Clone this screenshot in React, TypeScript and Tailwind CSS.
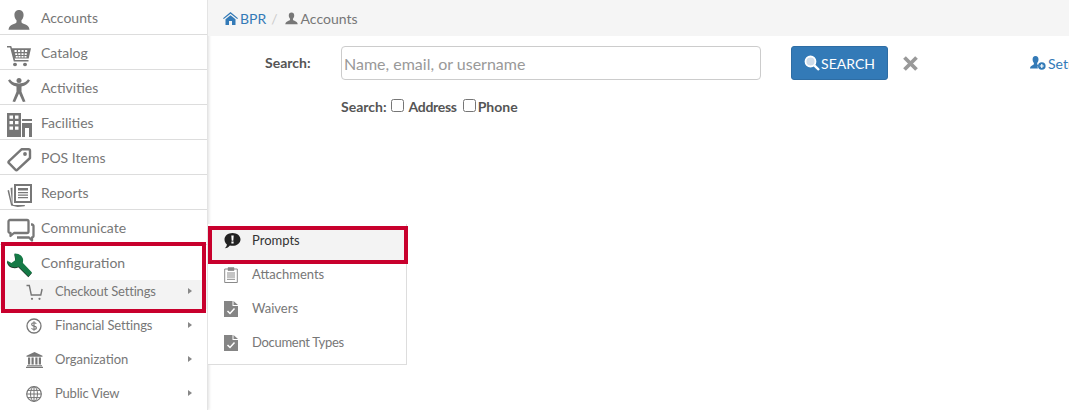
import type { ReactNode } from "react";

const gray = "#777777";

function UserIcon({ size = 24, color = gray }: { size?: number; color?: string }) {
  return (
    <svg width={size} height={size} viewBox="0 0 24 24" fill={color} className="shrink-0">
      <path d="M12 1c3.300 0 5 2.400 5 5.600 0 2.400-.9 4.500-2.300 5.800v2.100c.5 1 2.300 1.700 4.400 2.500 2.300.9 3.700 2 4.400 5.500H.5c.7-3.500 2.100-4.600 4.400-5.500 2.100-.8 3.900-1.500 4.400-2.500v-2.100C7.900 11.100 7 9 7 6.600 7 3.400 8.700 1 12 1z" />
    </svg>
  );
}

function CartIcon() {
  return (
    <svg width="24" height="22" viewBox="0 0 24 24" preserveAspectRatio="none" fill={gray} className="mt-[2px]">
      <path d="M0 1h4.200l.8 2.500h19l-2.300 11.300H7.700l.4 1.600h13.400v1.500H6.800L3.100 2.600H0z" />
      <g fill="#fff">
        <path d="M7.500 5.500h2.200v2.200H7.500zM11 5.500h2.200v2.200H11zM14.500 5.500h2.200v2.200h-2.200zM18 5.500h2.200v2.200H18zM8.200 9h2v2h-2zM11.300 9h2v2h-2zM14.500 9h2v2h-2zM17.700 9h2v2h-2zM8.800 12h2v1.600h-2zM11.500 12h2v1.600h-2zM14.500 12h2v1.600h-2zM17.500 12h2v1.600h-2z" />
      </g>
      <circle cx="8" cy="21.300" r="2" />
      <circle cx="18" cy="21.300" r="2" />
    </svg>
  );
}

function ActivityIcon() {
  return (
    <svg width="24" height="24" viewBox="0 0 24 24" fill={gray}>
      <circle cx="12" cy="2.500" r="2.500" />
      <path d="M1 2.500l2-1.200c2 2.600 3.900 4.100 9 4.100s7-1.500 9-4.100l2 1.200c-2 3.300-4.700 5.300-8.500 6v5.200L18.500 23.500l-2.600.5L12 15.500 8.100 24l-2.600-.5L9.500 13.700V8.500C5.700 7.800 3 5.800 1 2.500z" />
    </svg>
  );
}

function BuildingIcon() {
  return (
    <svg width="25" height="24" viewBox="0 0 25 24" fill={gray}>
      <path fillRule="evenodd" d="M0 0h14v24H0zM2.500 2.500v3.300h3.500V2.500zM8 2.500v3.300h3.500V2.500zM2.500 8v3.300h3.500V8zM8 8v3.300h3.500V8zM2.500 13.500v3.300h3.500v-3.300zM8 13.500v3.300h3.500v-3.300z" />
      <path d="M15 6h10v2H15z" />
      <path fillRule="evenodd" d="M15 10h10v14h-3v-9h-4v9h-3z" />
    </svg>
  );
}

function TagIcon() {
  return (
    <svg width="25" height="25" viewBox="0 0 25 25" fill="none" stroke={gray} strokeWidth="2.400" strokeLinejoin="round">
      <path d="M14.500 2.300h7a1.500 1.500 0 0 1 1.500 1.500v7.200L10.500 22.700a1.500 1.500 0 0 1-2.100 0L2 16.200a1.500 1.500 0 0 1 0-2.100z" />
      <circle cx="18" cy="7" r="1.900" fill={gray} stroke="none" />
    </svg>
  );
}

function ReportsIcon() {
  return (
    <svg width="25" height="24" viewBox="0 0 25 24" fill={gray}>
      <path fillRule="evenodd" d="M7 1h18v19H7zM9 3v15h14V3z" />
      <path d="M11 5h10v2.500H11zM11 9h10v1.200H11zM11 11.500h10v1.200H11zM11 14h10v1.200H11z" />
      <path d="M5.500 4.500v15.800l.9 1.700H18l-.4 1.200-7 .8-6.500-1.500L.5 7.500l1.500-.5 3 13.500L3.500 5z" />
    </svg>
  );
}

function ChatIcon() {
  return (
    <svg width="28" height="24" viewBox="0 0 28 24" fill="none" stroke={gray} strokeWidth="2.300" strokeLinejoin="round">
      <path d="M3 2h17a1.500 1.500 0 0 1 1.500 1.500v10a1.500 1.500 0 0 1-1.500 1.500H7l-3.500 3V15H3a1.500 1.500 0 0 1-1.500-1.500v-10A1.500 1.500 0 0 1 3 2z" />
      <path d="M24 6.500h1a1.500 1.500 0 0 1 1.500 1.500v10a1.500 1.500 0 0 1-1.500 1.500h0v3l-3-3H10" />
    </svg>
  );
}

const wrenchPath =
  "M7.500 .5C11 .3 15 2 16 6c.3 1.500 0 2.500-.5 3.500L25 19.500l-3.500 4-10-10c-1.500 1-4 1.300-6.500.5C2 13 .3 10.500 0 7.500L4.500 10l4-3z";

function WrenchIcon() {
  return (
    <svg width="26" height="25" viewBox="0 0 26 25">
      <path d={wrenchPath} fill="#1d2b22" transform="translate(-.2 .8)" />
      <path d={wrenchPath} fill="#157a46" />
    </svg>
  );
}

function SmallCart() {
  return (
    <svg width="17" height="17" viewBox="0 0 17 17" fill="none" stroke={gray} strokeWidth="1.400">
      <path d="M.5 1.500h2.800l2 9.500h9.500l1.300-6" />
      <circle cx="6" cy="14.800" r="1.100" fill={gray} stroke="none" />
      <circle cx="13.500" cy="14.800" r="1.100" fill={gray} stroke="none" />
    </svg>
  );
}

function DollarIcon() {
  return (
    <svg width="16" height="16" viewBox="0 0 16 16" fill="none" stroke={gray} strokeWidth="1.300">
      <circle cx="8" cy="8" r="7" />
      <path d="M10.300 5.700C9.800 4.900 9 4.700 8 4.700c-1.300 0-2.300.6-2.300 1.700 0 2.400 4.700 1 4.700 3.300 0 1.100-1.100 1.700-2.400 1.700-1.100 0-2-.4-2.500-1.200M8 3.200v9.600" strokeWidth="1.100" />
    </svg>
  );
}

function BankIcon() {
  return (
    <svg width="17" height="16" viewBox="0 0 17 16" fill={gray}>
      <path d="M8.500 0l8 3.700v1H.5v-1zM2 5.500h2.200v7H2zM5.500 5.500h2.200v7H5.500zM9.300 5.500h2.200v7H9.300zM12.800 5.500H15v7h-2.200zM1 13.300h15v1H1zM0 14.800h17V16H0z" />
    </svg>
  );
}

function GlobeIcon() {
  return (
    <svg width="16" height="16" viewBox="0 0 16 16" fill="none" stroke={gray} strokeWidth="1">
      <circle cx="8" cy="8" r="7.300" strokeWidth="1.200" />
      <ellipse cx="8" cy="8" rx="3.500" ry="7.300" />
      <path d="M8 .7v14.600M.7 8h14.600M1.800 4.400h12.400M1.800 11.600h12.400" />
    </svg>
  );
}

function PromptIcon() {
  return (
    <svg width="17" height="16" viewBox="0 0 17 16">
      <path d="M8.500 0C13 0 16.500 2.800 16.500 6.400s-3.500 6.400-8 6.400c-.9 0-1.800-.1-2.600-.3C4.800 14 3 15.200.8 15.300c1.100-1 1.900-2.300 2.100-3.900C1.400 10.200.5 8.400.5 6.400.5 2.800 4 0 8.500 0z" fill="#222" />
      <path d="M7.300 2.500h2.400l-.4 5.300H7.700zM7.400 8.600h2.200v2H7.400z" fill="#fff" />
    </svg>
  );
}

function ClipboardIcon() {
  return (
    <svg width="14" height="16" viewBox="0 0 14 16" fill="none" stroke="#8a8a8a" strokeWidth="1">
      <path d="M3.500 2H.7v13.500h12.600V2h-2.800" />
      <path d="M4 .8h6v2.500H4z" fill="#8a8a8a" />
      <path d="M3 6h8M3 8h8M3 10h8M3 12.300h8" />
    </svg>
  );
}

function FileCheckIcon() {
  return (
    <svg width="14" height="16" viewBox="0 0 14 16">
      <path d="M0 0h8.500v5H14v11H0zM9.500 0L14 4H9.500z" fill="#858585" />
      <path d="M3.500 10l2.500 2.500L10.500 7.500" fill="none" stroke="#fff" strokeWidth="1.500" />
    </svg>
  );
}

function NavRow({ icon, label, last }: { icon: ReactNode; label: string; last?: boolean }) {
  return (
    <div className={`flex h-[35px] items-center pl-[7px] ${last ? "" : "border-b border-[#dddddd]"}`}>
      <span className="flex w-[34px] shrink-0 items-start pt-[5px]">{icon}</span>
      <span className="text-[14px] text-[#777777]">{label}</span>
    </div>
  );
}

function SubRow({
  icon,
  label,
  className = "h-[34px]",
  labelClass = "",
}: {
  icon: ReactNode;
  label: string;
  className?: string;
  labelClass?: string;
}) {
  return (
    <div className={`flex items-center pl-[26px] pr-[15px] ${className}`}>
      <span className="flex w-[29px] shrink-0 items-center">{icon}</span>
      <span className={`flex-1 text-[13px] text-[#777777] ${labelClass}`}>{label}</span>
      <span className="mb-[3px] h-0 w-0 border-y-[3.500px] border-l-[4px] border-y-transparent border-l-[#888888]" />
    </div>
  );
}

function PopupRow({
  icon,
  label,
  active,
  labelClass = "",
}: {
  icon: ReactNode;
  label: string;
  active?: boolean;
  labelClass?: string;
}) {
  return (
    <div className="flex h-[34px] items-center pl-[16px]">
      <span className="flex w-[28px] shrink-0 items-center">{icon}</span>
      <span className={`text-[13px] ${active ? "text-[#333333]" : "text-[#777777]"} ${labelClass}`}>{label}</span>
    </div>
  );
}

export default function App() {
  return (
    <div className="relative flex h-[410px] w-[1069px] overflow-hidden bg-white font-['Lato',sans-serif]">
      <aside className="w-[208px] shrink-0 border-r border-[#e4e4e4] bg-white shadow-[1px_0_3px_rgba(0,0,0,0.12)]">
        <NavRow icon={<span className="ml-[1px] flex"><UserIcon size={22} /></span>} label="Accounts" />
        <NavRow icon={<CartIcon />} label="Catalog" />
        <NavRow icon={<ActivityIcon />} label="Activities" />
        <NavRow icon={<BuildingIcon />} label="Facilities" />
        <NavRow icon={<TagIcon />} label="POS Items" />
        <NavRow icon={<ReportsIcon />} label="Reports" />
        <NavRow icon={<ChatIcon />} label="Communicate" />
        <NavRow icon={<WrenchIcon />} label="Configuration" last />
        <SubRow
          icon={<SmallCart />}
          label="Checkout Settings"
          labelClass="tracking-[-0.18px]"
          className="h-[29px] bg-[#f3f3f3] pb-[5px]"
        />
        <SubRow icon={<DollarIcon />} label="Financial Settings" labelClass="tracking-[-0.12px]" />
        <SubRow icon={<BankIcon />} label="Organization" />
        <SubRow icon={<GlobeIcon />} label="Public View" labelClass="tracking-[-0.2px]" />
      </aside>

      <main className="min-w-0 flex-1">
        <div className="flex h-[36px] items-center bg-[#f5f5f5] pl-[15px] text-[14px]">
          <svg width="15" height="13" viewBox="0 0 15 13" fill="#337ab7">
            <path d="M7.500 0L15 6.200l-.8.8-6.700-5.300L.8 7 0 6.200zM2.500 7.200l5-4 5 4V13h-3.500V9H6v4H2.500z" />
          </svg>
          <span className="ml-[2px] text-[#337ab7]">BPR</span>
          <span className="ml-[5px] text-[#cccccc]">/</span>
          <span className="ml-[7px] flex"><UserIcon size={13} /></span>
          <span className="ml-[3px] text-[#777777]">Accounts</span>
        </div>

        <div className="mt-[10px] flex h-[34px] items-center whitespace-nowrap pl-[57px]">
          <span className="mb-[1px] w-[76px] shrink-0 text-[14px] font-bold text-[#555555]">Search:</span>
          <input
            readOnly
            placeholder="Name, email, or username"
            className="h-[34px] w-[420px] shrink-0 rounded-[4px] border border-[#cccccc] px-[2px] text-[16px] outline-none placeholder:text-[#999999]"
          />
          <button className="ml-[30px] flex h-[34px] w-[97px] shrink-0 items-center justify-center rounded-[3px] border border-[#2e6da4] bg-[#337ab7] text-[14px] text-white">
            <svg width="16" height="16" viewBox="0 0 16 16" className="mr-[1px]">
              <circle cx="6.500" cy="6.500" r="5" fill="#cfdcea" stroke="#ffffff" strokeWidth="1.800" />
              <path d="M10.300 10.300L15 15" stroke="#ffffff" strokeWidth="2.400" />
            </svg>
            SEARCH
          </button>
          <svg width="15" height="15" viewBox="0 0 15 15" className="ml-[15px] shrink-0">
            <path d="M1.500 1.500l12 12M13.500 1.500l-12 12" stroke="#999999" strokeWidth="3.800" />
          </svg>
          <svg width="16" height="14" viewBox="0 0 16 14" className="ml-[112px] shrink-0">
            <path d="M5.500 0C7.500 0 8.500 1.500 8.500 3.500c0 1.500-.6 2.700-1.300 3.400v1.300c.2.400.6.600 1 .8-.5.900-.7 2-.3 3.500H0c.2-2 1-2.600 2.100-3.100 1-.4 1.600-.8 1.800-1.200V6.900C3.200 6.200 2.600 5 2.600 3.500 2.600 1.500 3.500 0 5.500 0z" fill="#337ab7" />
            <circle cx="11.800" cy="10" r="3.800" fill="#337ab7" />
            <path d="M9.800 10h4M11.800 8v4" stroke="#ffffff" strokeWidth="1.200" />
          </svg>
          <span className="ml-[2px] shrink-0 text-[14px] text-[#337ab7]">Setup Account</span>
        </div>

        <div className="mt-[16px] flex items-center pl-[133px] text-[14px] font-bold text-[#555555]">
          <span>Search:</span>
          <input type="checkbox" readOnly className="mb-[3px] ml-[4px] h-[13px] w-[13px] appearance-auto" />
          <span className="ml-[5px] tracking-[-0.3px]">Address</span>
          <input type="checkbox" readOnly className="mb-[3px] ml-[6px] h-[13px] w-[13px] appearance-auto" />
          <span className="ml-[2px]">Phone</span>
        </div>
      </main>

      {/* flyout for the hovered settings row */}
      <div className="absolute left-[208px] top-[224px] h-[141px] w-[199px] border-r border-b border-[#dddddd] bg-white">
        <div className="absolute inset-x-0 top-[4px] h-[32px] bg-[#f3f3f3]" />
        <div className="relative">
          <PopupRow icon={<PromptIcon />} label="Prompts" active />
          <PopupRow icon={<ClipboardIcon />} label="Attachments" />
          <PopupRow icon={<FileCheckIcon />} label="Waivers" />
          <PopupRow icon={<FileCheckIcon />} label="Document Types" labelClass="tracking-[-0.3px]" />
        </div>
      </div>

      {/* red callout boxes */}
      <div className="pointer-events-none absolute left-[1px] top-[242px] h-[71px] w-[205px] border-4 border-[#c8002d]" />
      <div className="pointer-events-none absolute left-[208px] top-[226px] h-[38px] w-[200px] border-4 border-[#c8002d]" />
    </div>
  );
}
